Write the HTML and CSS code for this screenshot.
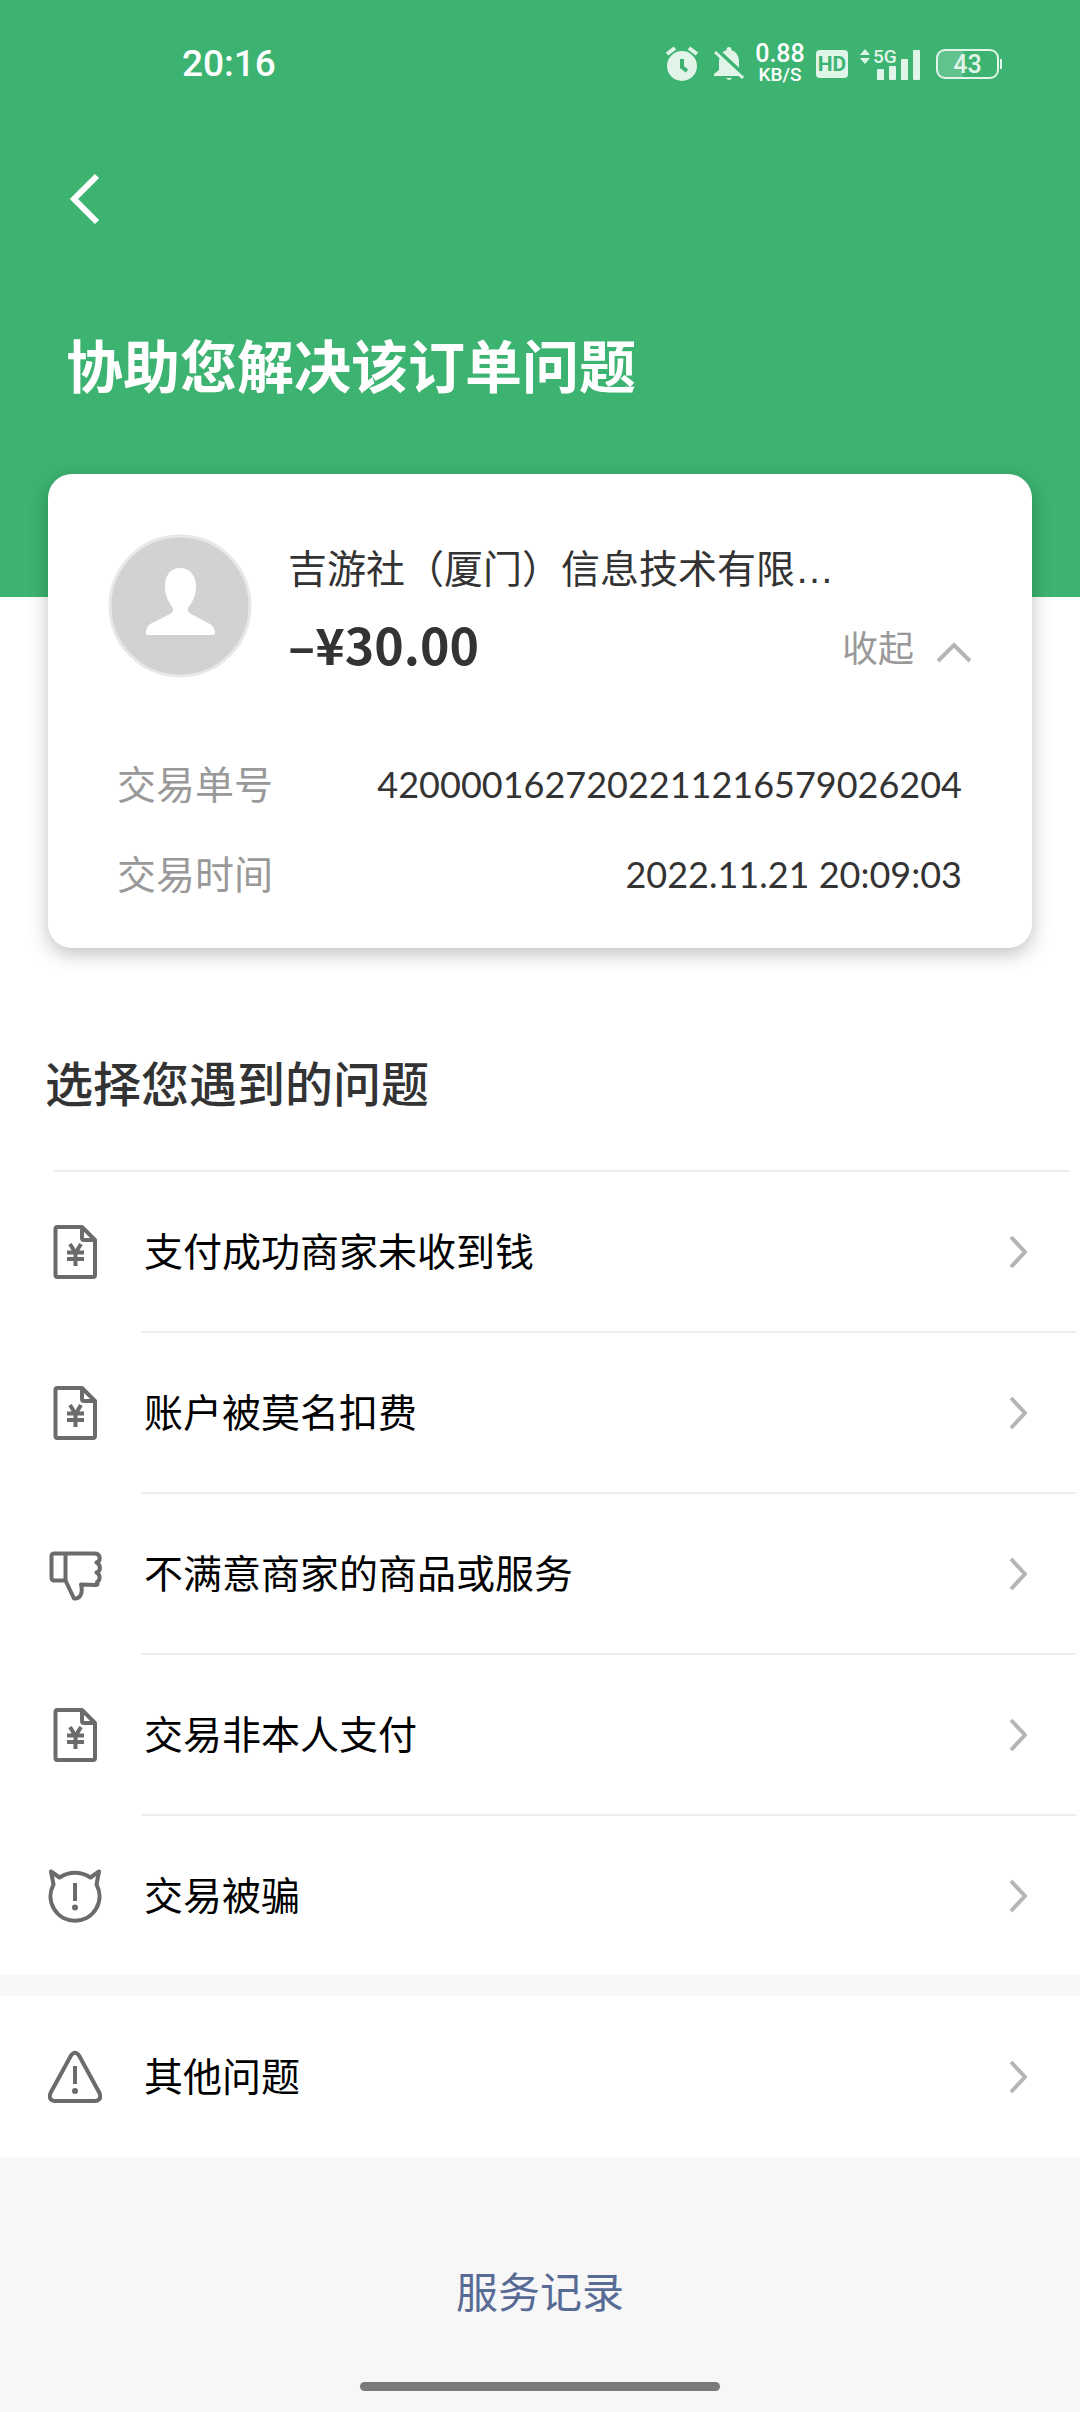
FILE: index.html
```html
<!DOCTYPE html>
<html lang="zh-CN">
<head>
  <meta charset="UTF-8" />
  <meta name="viewport" content="width=device-width, initial-scale=1.0"/>
  <title>协助您解决该订单问题</title>
  <link rel="stylesheet" href="styles.css">
</head>
<body>
  <!-- shared icons -->
  <svg class="sprite" aria-hidden="true">
    <symbol id="icon-bill" viewBox="0 0 54 54">
      <path d="M9.500 2H34L47 15V50a2 2 0 0 1-2 2H9.500a2 2 0 0 1-2-2V4a2 2 0 0 1 2-2z"/>
      <path d="M34 2V13a2 2 0 0 0 2 2H47"/>
      <path d="M22 19l5.500 9L33 19M27.500 27.500V41M19 27.500H36M19 34H36"/>
    </symbol>
    <symbol id="icon-down" viewBox="0 0 54 54">
      <path d="M6 6.500H46.500C53 6.500 53 14 48.500 15.500C53 18 53 24 48.500 25.500C53 28 52 33.500 49 35C51 39 49 38 33 37.500C35 45 33 52 26 51.500L17.500 33.500H6a2.500 2.500 0 0 1-2.500-2.500V9a2.500 2.500 0 0 1 2.500-2.500"/>
      <path d="M17.500 6.500V33.500"/>
    </symbol>
    <symbol id="icon-devil" viewBox="0 0 54 54">
      <path d="M3 2.500L11.500 8.500Q27 -1 42.500 8.500L51 2.500L48.500 15.500A24.500 24.500 0 1 1 5.500 15.500Z"/>
      <path d="M27 14V32"/>
      <circle class="dot" cx="27" cy="38.500" r="3"/>
    </symbol>
    <symbol id="icon-warn" viewBox="0 0 54 54">
      <path d="M23 5.500Q27 0 31 5.500L51.500 43Q54 50 47.500 51H6.500Q0 50 2.500 43Z"/>
      <path d="M27 16V34"/>
      <circle class="dot" cx="27" cy="41" r="3"/>
    </symbol>
    <symbol id="icon-arrow" viewBox="0 0 18 34">
      <path d="M2 2L16 17L2 32"/>
    </symbol>
  </svg>

  <header class="header">
    <div class="status-bar">
      <time class="clock">20:16</time>
      <div class="status-icons">
        <svg width="37" height="36" viewBox="0 0 37 36" aria-hidden="true">
          <circle cx="17" cy="20" r="15" fill="#e0f4e8"/>
          <path d="M2 8L10 2M24 2L32 8" stroke="#e0f4e8" stroke-width="4" fill="none"/>
          <path d="M17 13V21L22 25" stroke="#3cb371" stroke-width="4" fill="none"/>
        </svg>
        <svg width="30" height="36" viewBox="0 0 30 36" aria-hidden="true">
          <path d="M15 1q2.500 0 2.500 3Q25 7 25 15V24L30 28V30H0V28L5 24V15Q5 7 12.500 4Q12.500 1 15 1zM12 32h6q-3 4-6 0z" fill="#e0f4e8"/>
          <path d="M3 4L30 29" stroke="#3cb371" stroke-width="4"/>
          <path d="M1 6L29 32" stroke="#e0f4e8" stroke-width="3"/>
        </svg>
        <div class="speed"><span class="speed-value">0.88</span><span class="speed-unit">KB/S</span></div>
        <span class="hd">HD</span>
        <svg class="signal" width="64" height="36" viewBox="0 0 64 36" aria-hidden="true">
          <g fill="#e0f4e8">
            <path d="M0 9L5 3L10 9zM0 12L5 18L10 12z"/>
            <rect x="17" y="23" width="7" height="11" rx="1"/>
            <rect x="29" y="20" width="7" height="14" rx="1"/>
            <rect x="41" y="13" width="7" height="21" rx="1"/>
            <rect x="53" y="4" width="7" height="30" rx="1"/>
          </g>
          <text class="net" x="13" y="17">5G</text>
        </svg>
        <div class="battery"><span class="battery-level">43</span></div>
      </div>
    </div>
    <nav class="nav">
      <button class="back-btn" aria-label="返回">
        <svg width="34" height="54" viewBox="0 0 34 54"><path d="M30 4L7 27L30 50"/></svg>
      </button>
    </nav>
    <h1>协助您解决该订单问题</h1>
  </header>

  <main class="content">
    <section class="order-card">
      <div class="order-top">
        <svg class="avatar" viewBox="0 0 144 144" aria-hidden="true">
          <circle cx="72" cy="72" r="70" fill="#d2d2d2" stroke="#e8e8e8" stroke-width="3"/>
          <path d="M72 34C62 34 57 42 57 52C57 62 61 69 65 74Q66 78 62 80L44 89Q38 92 38 99Q38 101 41 101H104Q107 101 107 99Q107 92 100 89L83 80Q79 78 80 74C84 69 88 62 88 52C88 42 82 34 72 34z" fill="#fff"/>
        </svg>
        <div class="order-info">
          <p class="merchant">吉游社（厦门）信息技术有限…</p>
          <div class="amount-row">
            <strong class="amount">–¥30.00</strong>
            <button class="fold-btn">收起
              <svg width="36" height="22" viewBox="0 0 36 22"><path d="M2 20L18 4L34 20"/></svg>
            </button>
          </div>
        </div>
      </div>
      <dl class="order-detail">
        <div><dt>交易单号</dt><dd>4200001627202211216579026204</dd></div>
        <div><dt>交易时间</dt><dd>2022.11.21 20:09:03</dd></div>
      </dl>
    </section>

    <h2>选择您遇到的问题</h2>
    <ul class="issues">
      <li><a href="#not-received"><svg class="icon"><use href="#icon-bill"/></svg><span>支付成功商家未收到钱</span><svg class="arrow"><use href="#icon-arrow"/></svg></a></li>
      <li><a href="#charged"><svg class="icon"><use href="#icon-bill"/></svg><span>账户被莫名扣费</span><svg class="arrow"><use href="#icon-arrow"/></svg></a></li>
      <li><a href="#unsatisfied"><svg class="icon"><use href="#icon-down"/></svg><span>不满意商家的商品或服务</span><svg class="arrow"><use href="#icon-arrow"/></svg></a></li>
      <li><a href="#not-me"><svg class="icon"><use href="#icon-bill"/></svg><span>交易非本人支付</span><svg class="arrow"><use href="#icon-arrow"/></svg></a></li>
      <li><a href="#fraud"><svg class="icon"><use href="#icon-devil"/></svg><span>交易被骗</span><svg class="arrow"><use href="#icon-arrow"/></svg></a></li>
    </ul>
  </main>

  <ul class="issues other">
    <li><a href="#other"><svg class="icon"><use href="#icon-warn"/></svg><span>其他问题</span><svg class="arrow"><use href="#icon-arrow"/></svg></a></li>
  </ul>

  <footer class="footer">
    <a href="#records">服务记录</a>
    <div class="home-bar"></div>
  </footer>
</body>
</html>
```
FILE: styles.css
```css
* {
  box-sizing: border-box;
}
body {
  margin: 0;
  min-height: 100vh;
  display: flex;
  flex-direction: column;
  font-family: Lato, "Noto Sans CJK SC", sans-serif;
  font-size: 39px;
  line-height: 60px;
  color: #333;
  background: #f7f7f7;
}
h1, h2, p, ul, dl, dd {
  margin: 0;
  padding: 0;
}
a {
  text-decoration: none;
}
button {
  border: none;
  background: none;
  padding: 0;
  font: inherit;
  cursor: pointer;
}
svg {
  display: block;
  flex-shrink: 0;
}
.sprite {
  position: absolute;
  width: 0;
  height: 0;
}

/* header */
.header {
  background: #3cb371;
  color: #fff;
  padding-bottom: 190px;
}
.status-bar {
  display: flex;
  align-items: center;
  justify-content: space-between;
  height: 127px;
  padding: 0 78px 0 182px;
}
.clock {
  font-family: Roboto, sans-serif;
  font-size: 37px;
  font-weight: 500;
}
.status-icons {
  display: flex;
  align-items: center;
  gap: 12px;
  font-family: Roboto, sans-serif;
  font-weight: 500;
}
.speed {
  display: flex;
  flex-direction: column;
  align-items: center;
  width: 48px;
}
.speed-value {
  font-size: 25px;
  line-height: 22px;
}
.speed-unit {
  font-size: 19px;
  line-height: 19px;
}
.hd {
  width: 32px;
  height: 28px;
  border-radius: 4px;
  background: #e0f4e8;
  color: #3cb371;
  font-size: 21px;
  font-weight: 700;
  line-height: 28px;
  text-align: center;
}
.signal {
  overflow: visible;
}
.net {
  font-size: 19px;
  fill: #e0f4e8;
}
.battery {
  position: relative;
  width: 63px;
  height: 30px;
  margin-right: 3px;
  border: 2px solid #e0f4e8;
  border-radius: 9px;
  background: linear-gradient(90deg, #62c28d 43%, transparent 43%);
  color: #e0f4e8;
  font-size: 25px;
  line-height: 27px;
  text-align: center;
}
.battery::after {
  content: "";
  position: absolute;
  top: 8px;
  right: -5px;
  width: 2px;
  height: 10px;
  background: #e0f4e8;
}
.nav {
  display: flex;
  align-items: center;
  height: 143px;
  padding: 0 67px;
}
.back-btn path {
  fill: none;
  stroke: #fff;
  stroke-width: 6;
}
h1 {
  padding: 56px 66px 0;
  font-size: 57px;
  font-weight: 700;
  line-height: 81px;
}

/* order card */
.content {
  background: #fff;
}
.order-card {
  position: relative;
  margin: -123px 48px 0;
  padding: 60px;
  padding-bottom: 29px;
  border-radius: 24px;
  background: #fff;
  box-shadow: 0 6px 20px rgba(0, 0, 0, 0.25);
}
.order-top {
  display: flex;
  gap: 36px;
}
.avatar {
  width: 144px;
  height: 144px;
}
.order-info {
  flex: 1;
  min-width: 0;
  padding-top: 6px;
}
.merchant {
  overflow: hidden;
  white-space: nowrap;
  font-family: "Liberation Sans", "Noto Sans CJK SC", sans-serif;
}
.amount-row {
  display: flex;
  align-items: flex-start;
  justify-content: space-between;
  padding-top: 13px;
}
.amount {
  font-family: "Noto Sans CJK SC", sans-serif;
  font-size: 50px;
  font-weight: 700;
}
.fold-btn {
  display: flex;
  align-items: center;
  gap: 22px;
  padding-top: 5px;
  color: #999;
  font-size: 36px;
}
.fold-btn svg {
  margin-top: 8px;
}
.fold-btn path {
  fill: none;
  stroke: #b5b5b5;
  stroke-width: 4;
}
.order-detail {
  padding: 61px 10px 0 9px;
}
.order-detail div {
  display: flex;
  align-items: center;
  justify-content: space-between;
  height: 90px;
}
.order-detail dt {
  color: #999;
}
.order-detail dd {
  font-size: 36px;
}

/* issue list */
h2 {
  padding: 98px 45px 48px;
  font-size: 48px;
  font-weight: 500;
  line-height: 76px;
}
.issues {
  list-style: none;
  background: #fff;
}
.content .issues::before {
  content: "";
  display: block;
  height: 2px;
  margin: 0 10px 0 54px;
  background: #ededed;
}
.issues a {
  display: flex;
  align-items: center;
  gap: 42px;
  height: 159px;
  padding: 0 53px 0 48px;
  color: #000;
}
.issues span {
  flex: 1;
  padding-bottom: 2px;
}
.issues li + li::before {
  content: "";
  display: block;
  height: 2px;
  margin: 0 4px 0 141px;
  background: #ededed;
}
.icon {
  width: 54px;
  height: 54px;
  fill: none;
  stroke: #6b6b6b;
  stroke-width: 4;
  stroke-linejoin: round;
}
.dot {
  fill: #6b6b6b;
  stroke: none;
}
.arrow {
  width: 18px;
  height: 34px;
  fill: none;
  stroke: #b5b5b5;
  stroke-width: 4;
}
.other {
  margin-top: 21px;
}
.other a {
  height: 161px;
}

/* footer */
.footer {
  flex: 1;
  display: flex;
  flex-direction: column;
  align-items: center;
  justify-content: space-between;
  padding: 105px 0 21px;
}
.footer a {
  color: #576b95;
  font-size: 42px;
}
.home-bar {
  width: 33.3333%;
  height: 9px;
  border-radius: 5px;
  background: #7a7a7a;
}
```
